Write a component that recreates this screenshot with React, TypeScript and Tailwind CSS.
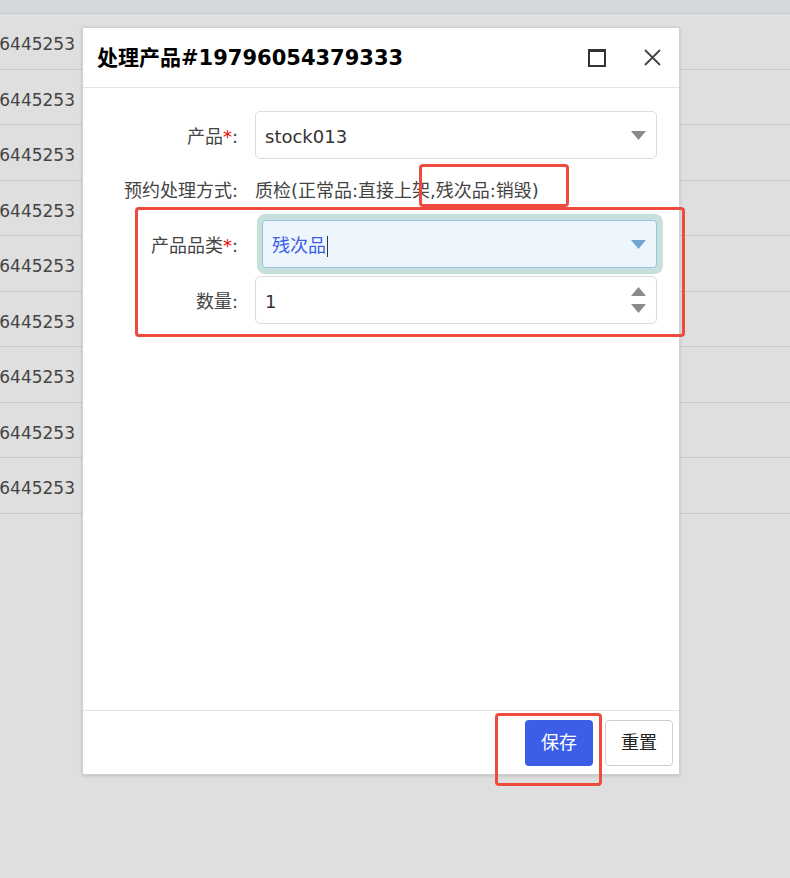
import React from "react";

const rows = Array.from({ length: 9 });

function Arrow({ color }: { color: string }) {
  return (
    <svg width="15" height="9" viewBox="0 0 15 9">
      <polygon points="0,0 15,0 7.5,9" fill={color} />
    </svg>
  );
}

export default function App() {
  const font = { fontFamily: '"DejaVu Sans", "Noto Sans CJK SC", sans-serif' };
  return (
    <div className="relative w-[790px] h-[878px] overflow-hidden bg-[#dfdfdf]" style={font}>
      <div className="h-[14px] bg-[#d3d8dc] border-b border-[#c8cccf]" />
      <div className="flex flex-col">
        {rows.map((_, i) => (
          <div key={i} className="h-[55.5px] border-b border-[#c9c9c9] flex items-center pt-[7px]">
            <div className="w-[75px] overflow-hidden flex justify-end">
              <span className="whitespace-nowrap text-[17px] text-[#444]">96445253</span>
            </div>
          </div>
        ))}
      </div>

      {/* dialog */}
      <div className="absolute left-[82px] top-[27px] w-[598px] h-[748px] bg-white border border-[#d0d0d0] shadow-[0_1px_3px_rgba(0,0,0,0.15)] flex flex-col">
        <div className="h-[60px] border-b border-[#e3e3e3] flex items-center pl-[14px] pr-[18px]">
          <div className="flex-1 text-[21px] font-bold text-black pt-[2px]">处理产品#19796054379333</div>
          <div className="w-[18px] h-[18px] border-2 border-[#333] border-t-[3px] mr-[38px]" />
          <svg width="17" height="17" viewBox="0 0 17 17">
            <path d="M1 1 L16 16 M16 1 L1 16" stroke="#444" strokeWidth="1.8" />
          </svg>
        </div>

        <div className="flex-1 flex flex-col pt-[23px] pr-[22px] text-[18px]">
          <div className="flex items-center h-[48px]">
            <div className="w-[157px] text-right text-[#444] pr-[2px] pt-[3px]">
              产品<span className="text-[#e00]">*</span>:
            </div>
            <div className="ml-[15px] flex-1 h-[48px] border border-[#dcdcdc] rounded-[5px] flex items-center pl-[9px] pr-[10px]">
              <span className="flex-1 text-[#333] pt-[3px]">stock013</span>
              <Arrow color="#8a8a8a" />
            </div>
          </div>
          <div className="flex items-center h-[55px] pt-[8px]">
            <div className="w-[157px] text-right text-[#444] pr-[2px] whitespace-nowrap">预约处理方式:</div>
            <div className="ml-[15px] text-[#444] whitespace-nowrap">质检(正常品:直接上架,残次品:销毁)</div>
          </div>
          <div className="flex items-center h-[60px]">
            <div className="w-[157px] text-right text-[#444] pr-[2px] pt-[3px]">
              产品品类<span className="text-[#e00]">*</span>:
            </div>
            <div className="ml-[17px] flex-1 -mr-[6px] rounded-[8px] bg-[#c6e0dc] pt-[6px] pb-[6px] pl-[5px] pr-[6px]">
              <div className="h-[48px] bg-[#edf5fd] border border-[#9cc1e2] rounded-[4px] flex items-center pl-[9px] pr-[10px]">
                <span className="flex-1 text-[#3b5ee8] pt-[2px]">
                  残次品<span className="inline-block w-px h-[21px] bg-[#333] align-middle ml-[1px]" />
                </span>
                <Arrow color="#6fa6d3" />
              </div>
            </div>
          </div>
          <div className="flex items-center h-[48px] mt-[2px]">
            <div className="w-[157px] text-right text-[#444] pr-[2px] pt-[3px]">数量:</div>
            <div className="ml-[15px] flex-1 h-[48px] border border-[#dcdcdc] rounded-[5px] flex items-center pl-[9px] pr-[10px]">
              <span className="flex-1 text-[#333] pt-[3px]">1</span>
              <div className="flex flex-col gap-[8px]">
                <svg width="15" height="9" viewBox="0 0 15 9">
                  <polygon points="0,9 15,9 7.5,0" fill="#8a8a8a" />
                </svg>
                <Arrow color="#8a8a8a" />
              </div>
            </div>
          </div>
        </div>

        <div className="h-[64px] border-t border-[#e3e3e3] flex items-center justify-end gap-[12px] pr-[6px]">
          <button className="w-[68px] h-[46px] rounded-[4px] bg-[#3b5de7] text-white text-[18px]">保存</button>
          <button className="w-[68px] h-[46px] rounded-[4px] bg-white border border-[#cfcfcf] text-[#222] text-[18px]">重置</button>
        </div>
      </div>

      {/* annotations */}
      <div className="absolute left-[419px] top-[164px] w-[150px] h-[43px] border-[3px] border-[#ef4a3f] rounded-[4px]" />
      <div className="absolute left-[135px] top-[207px] w-[550px] h-[130px] border-[3px] border-[#ef4a3f] rounded-[4px]" />
      <div className="absolute left-[495px] top-[713px] w-[107px] h-[73px] border-[3px] border-[#ef4a3f] rounded-[4px]" />
    </div>
  );
}
